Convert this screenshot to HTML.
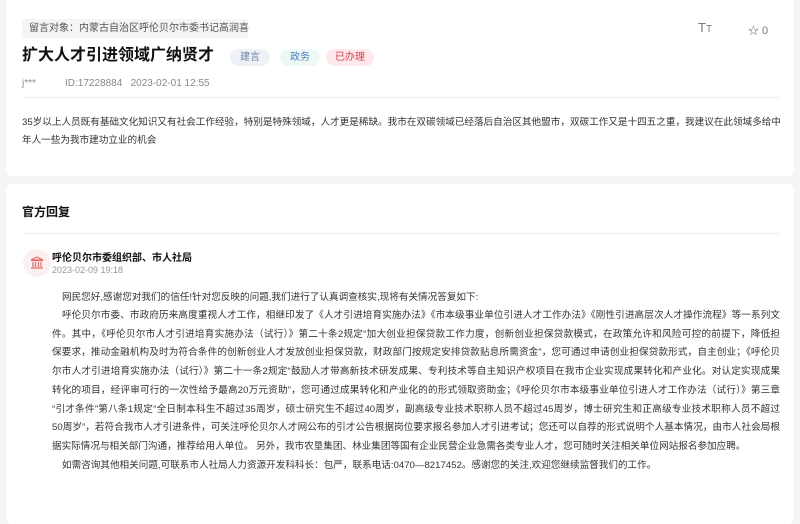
<!DOCTYPE html>
<html><head><meta charset="utf-8"><style>
*{margin:0;padding:0;box-sizing:border-box}
body{width:800px;height:514px;overflow:hidden;background:#f4f5f7;font-family:"Liberation Sans","Noto Sans CJK SC",sans-serif;color:#333;position:relative}
.card{position:absolute;left:6px;right:6px;background:#fff;border-radius:6px}
.a{position:absolute;white-space:nowrap}
.l{position:absolute;left:52px;width:728px;font-size:9.6px;line-height:14px;white-space:nowrap;overflow:hidden;text-align:justify;text-align-last:justify;color:#333}
.s{font-size:9.6px;line-height:14px}
.tag{position:absolute;top:49px;height:17px;border-radius:9px;font-size:10px;line-height:17px;text-align:center}
</style></head><body>
<div class="card" style="top:0;height:176px;border-radius:0 0 6px 6px"></div>
<div class="card" style="top:184px;height:340px"></div>
<div class="a" style="left:22px;top:19px;width:226px;height:19px;background:#f5f5f5;font-size:10px;line-height:19px;padding-left:7px;color:#555">留言对象：内蒙古自治区呼伦贝尔市委书记高润喜</div>
<div class="a" style="left:698px;top:20px;font-size:13px;color:#777">T<span style="font-size:10px">T</span></div>
<div class="a" style="left:748px;top:22px;font-size:11px;color:#777">☆ 0</div>
<div class="a" style="left:22px;top:46px;font-size:16px;font-weight:bold;color:#111;line-height:20px">扩大人才引进领域广纳贤才</div>
<div class="tag" style="left:230px;width:40px;background:#eef2f7;color:#6c84a8">建言</div>
<div class="tag" style="left:280px;width:40px;background:#eef8f4;color:#4a7fc0">政务</div>
<div class="tag" style="left:326px;width:48px;background:#fde8eb;color:#d6404d">已办理</div>
<div class="a" style="left:22px;top:78px;font-size:10px;color:#888">j***</div>
<div class="a" style="left:65px;top:78px;font-size:10px;color:#888">ID:17228884&nbsp;&nbsp;&nbsp;2023-02-01 12:55</div>
<div class="a" style="left:22px;top:97px;width:758px;height:1px;background:#eee"></div>
<div class="l" style="left:22px;width:758px;top:116px">35岁以上人员既有基础文化知识又有社会工作经验，特别是特殊领域，人才更是稀缺。我市在双碳领域已经落后自治区其他盟市，双碳工作又是十四五之重，我建议在此领域多给中</div>
<div class="a s" style="left:22px;top:134px">年人一些为我市建功立业的机会</div>
<div class="a" style="left:22px;top:203px;font-size:12px;font-weight:bold;color:#111">官方回复</div>
<div class="a" style="left:22px;top:233px;width:758px;height:1px;background:#eee"></div>
<div class="a" style="left:23px;top:249px;width:28px;height:28px;border-radius:50%;background:#fcefef"></div>
<svg class="a" style="left:30px;top:256px" width="14" height="14" viewBox="0 0 14 14"><path d="M1 4L7 1L13 4Z M1 4.5H13 M3 6V11 M5.5 6V11 M8.5 6V11 M11 6V11 M1 12H13" stroke="#e06a6a" fill="none" stroke-width="1.2"/></svg>
<div class="a" style="left:52px;top:249px;font-size:10px;font-weight:bold;color:#111">呼伦贝尔市委组织部、市人社局</div>
<div class="a" style="left:52px;top:265px;font-size:9px;color:#999">2023-02-09 19:18</div>
<div class="a s" style="left:62px;top:291px">网民您好,感谢您对我们的信任!针对您反映的问题,我们进行了认真调查核实,现将有关情况答复如下:</div>
<div class="l" style="left:62px;width:718px;top:309px">呼伦贝尔市委、市政府历来高度重视人才工作，相继印发了《人才引进培育实施办法》《市本级事业单位引进人才工作办法》《刚性引进高层次人才操作流程》等一系列文</div>
<div class="l" style="top:328px">件。其中，《呼伦贝尔市人才引进培育实施办法（试行）》第二十条2规定“加大创业担保贷款工作力度，创新创业担保贷款模式，在政策允许和风险可控的前提下，降低担</div>
<div class="l" style="top:346px">保要求，推动金融机构及时为符合条件的创新创业人才发放创业担保贷款，财政部门按规定安排贷款贴息所需资金”，您可通过申请创业担保贷款形式，自主创业；《呼伦贝</div>
<div class="l" style="top:365px">尔市人才引进培育实施办法（试行）》第二十一条2规定“鼓励人才带高新技术研发成果、专利技术等自主知识产权项目在我市企业实现成果转化和产业化。对认定实现成果</div>
<div class="l" style="top:384px">转化的项目，经评审可行的一次性给予最高20万元资助”，您可通过成果转化和产业化的的形式领取资助金；《呼伦贝尔市本级事业单位引进人才工作办法（试行）》第三章</div>
<div class="l" style="top:403px">“引才条件”第八条1规定“全日制本科生不超过35周岁，硕士研究生不超过40周岁，副高级专业技术职称人员不超过45周岁，博士研究生和正高级专业技术职称人员不超过</div>
<div class="l" style="top:421px">50周岁”，若符合我市人才引进条件，可关注呼伦贝尔人才网公布的引才公告根据岗位要求报名参加人才引进考试；您还可以自荐的形式说明个人基本情况，由市人社会局根</div>
<div class="a s" style="left:52px;top:440px">据实际情况与相关部门沟通，推荐给用人单位。 另外，我市农垦集团、林业集团等国有企业民营企业急需各类专业人才，您可随时关注相关单位网站报名参加应聘。</div>
<div class="a s" style="left:62px;top:459px">如需咨询其他相关问题,可联系市人社局人力资源开发科科长：包严，联系电话:0470—8217452。感谢您的关注,欢迎您继续监督我们的工作。</div>
</body></html>
